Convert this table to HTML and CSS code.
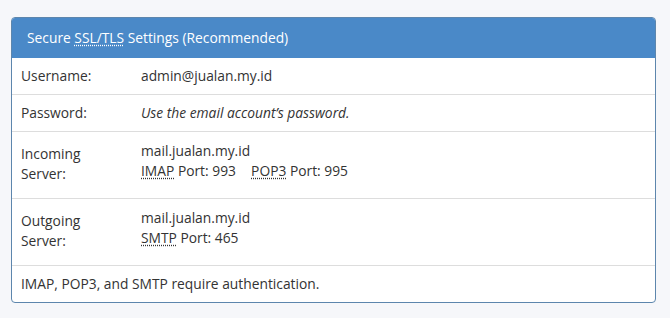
FILE: index.html
```html
<!DOCTYPE html>
<html lang="en">
<head>
    <meta charset="UTF-8">
    <title>Secure SSL/TLS Settings</title>
    <link rel="stylesheet" href="styles.css">
</head>
<body>
    <div class="panel">
        <div class="panel-heading">
            Secure <abbr title="Secure Sockets Layer/Transport Layer Security">SSL/TLS</abbr> Settings (Recommended)
        </div>
        <table class="settings-table">
            <tr>
                <td class="label">Username:</td>
                <td class="value">admin@jualan.my.id</td>
            </tr>
            <tr>
                <td class="label">Password:</td>
                <td class="value"><em>Use the email account’s password.</em></td>
            </tr>
            <tr class="server-row">
                <td class="label">Incoming<br>Server:</td>
                <td class="value">
                    mail.jualan.my.id<br>
                    <abbr title="Internet Message Access Protocol">IMAP</abbr> Port: 993
                    <span class="spacer"></span>
                    <abbr title="Post Office Protocol 3">POP3</abbr> Port: 995
                </td>
            </tr>
            <tr class="server-row">
                <td class="label">Outgoing<br>Server:</td>
                <td class="value">
                    mail.jualan.my.id<br>
                    <abbr title="Simple Mail Transfer Protocol">SMTP</abbr> Port: 465
                </td>
            </tr>
            <tr>
                <td class="note" colspan="2">IMAP, POP3, and SMTP require authentication.</td>
            </tr>
        </table>
    </div>
</body>
</html>
```

FILE: styles.css
```css
:root {
    --panel-blue: #4a89c8;
    --panel-border: #5d86ad;
    --row-border: #dddddd;
    --text-color: #333333;
    --page-bg: #f6f7fa;
}

* {
    box-sizing: border-box;
}

body {
    margin: 0;
    padding: 17px 14px 0 11px;
    background-color: var(--page-bg);
    font-family: "Open Sans", "Liberation Sans", sans-serif;
    font-size: 13.8px;
    line-height: 20px;
    color: var(--text-color);
}

.panel {
    background-color: #ffffff;
    border: 1px solid var(--panel-border);
    border-radius: 4px;
    overflow: hidden;
}

.panel-heading {
    background-color: var(--panel-blue);
    color: #ffffff;
    padding: 10px 15px;
}

abbr {
    text-decoration: underline dotted;
    text-underline-offset: 2px;
}

.settings-table {
    width: 100%;
    border-collapse: collapse;
}

.settings-table td {
    padding: 8px 9px;
    border-top: 1px solid var(--row-border);
}

.settings-table tr:first-child td {
    border-top: none;
}

.label {
    width: 120px;
    vertical-align: middle;
}

.value {
    vertical-align: top;
}

.server-row td {
    padding-top: 9px;
    padding-bottom: 17px;
}

.server-row .label {
    padding-top: 12px;
    padding-bottom: 14px;
}

.spacer {
    display: inline-block;
    width: 8px;
}

.note {
    padding-top: 8px;
}
```
